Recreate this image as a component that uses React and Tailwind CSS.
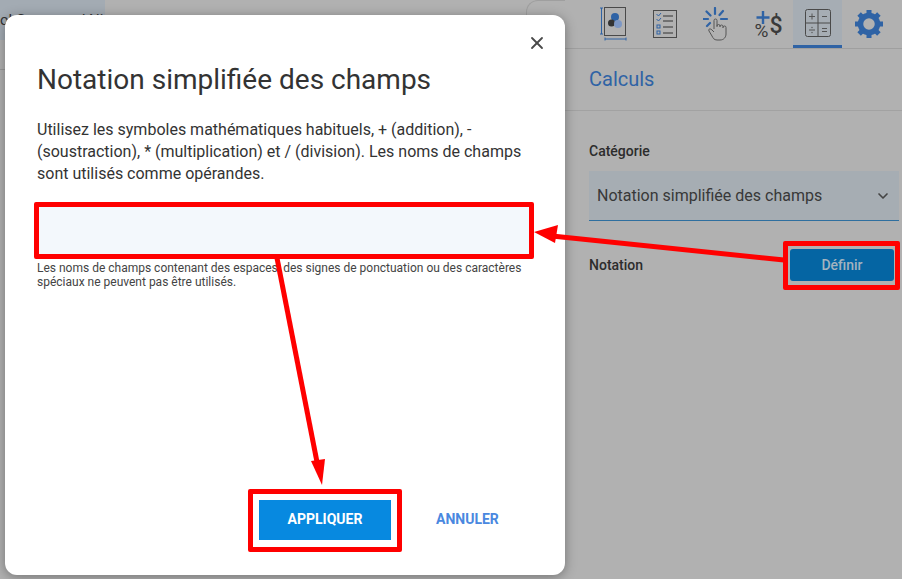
import React from 'react';
import { X, ChevronDown } from 'lucide-react';

function BookIcon() {
  return (
    <svg width="28" height="34" viewBox="0 0 28 34" fill="none">
      <path d="M1.500 1v26M0 1h3M0 27h3" stroke="#2f63a5" strokeWidth="1" />
      <rect x="4.500" y="0.500" width="21" height="28" stroke="#4a4a4a" strokeWidth="1" />
      <path d="M5 32h21M5 30.500v3M26 30.500v3" stroke="#2f63a5" strokeWidth="1" />
      <circle cx="15" cy="10" r="4" fill="#2f63a5" />
      <circle cx="11.500" cy="16" r="3.500" fill="#333333" />
      <circle cx="18" cy="17" r="4" fill="#7d97c4" />
    </svg>
  );
}

function ChecklistIcon() {
  return (
    <svg width="24" height="28" viewBox="0 0 24 28" fill="none">
      <rect x="0.500" y="0.500" width="23" height="27" stroke="#4a4a4a" strokeWidth="1" />
      <path d="M3.500 4l2 2 2.500-3M3.500 9l2 2 2.500-3" stroke="#2f63a5" strokeWidth="1" />
      <rect x="4" y="15" width="3" height="3" stroke="#2f63a5" strokeWidth="1" />
      <rect x="4" y="21" width="3" height="3" stroke="#2f63a5" strokeWidth="1" />
      <path d="M10 6h10M10 11h10M10 17h10M10 23h10" stroke="#333333" strokeWidth="1" />
    </svg>
  );
}

function TouchIcon() {
  return (
    <svg width="26" height="34" viewBox="0 0 26 34" fill="none">
      <path d="M12 1v6M3.500 4.500l4 4M20 4l-3.500 4M0 12h5M18 12h6M4 19l3-3" stroke="#2f63a5" strokeWidth="2.200" strokeLinecap="round" />
      <path d="M11 22V13.500a1.500 1.500 0 0 1 3 0V20m0-1a1.500 1.500 0 0 1 3 0v1m0-.500a1.500 1.500 0 0 1 3 0V21m0-.500a1.500 1.500 0 0 1 3 0V27c0 3-2 6-6 6h-3c-3 0-4-2-5-4l-3-5c-1-2 1-3 3-1l2 2" stroke="#555555" strokeWidth="1" />
    </svg>
  );
}

function MoneyIcon() {
  return (
    <div className="relative h-[28px] w-6">
      <svg width="24" height="28" viewBox="0 0 24 28" fill="none">
        <path d="M8 1v13M1.500 7.500h13" stroke="#2f63a5" strokeWidth="2.400" />
      </svg>
      <span className="absolute left-0 top-[11px] text-[19px] leading-5 text-[#3a3a3a]">%</span>
      <span className="absolute left-[15px] top-[4px] text-[23px] font-medium leading-6 text-[#3a3a3a]">$</span>
    </div>
  );
}

function CalcIcon() {
  return (
    <svg width="26" height="28" viewBox="0 0 26 28" fill="none">
      <rect x="0.500" y="0.500" width="25" height="27" rx="2" stroke="#4a4a4a" strokeWidth="1" />
      <path d="M13 1v26M1 14h24" stroke="#4a4a4a" strokeWidth="1" />
      <path d="M4 7.500h6M7 4.500v6M17 7.500h5M4 21h6M17 19.500h5M17 22.500h5" stroke="#555555" strokeWidth="1" />
      <circle cx="7" cy="18.500" r="0.700" fill="#555555" />
      <circle cx="7" cy="23.500" r="0.700" fill="#555555" />
    </svg>
  );
}

function GearIcon() {
  return (
    <svg width="28" height="28" viewBox="0 0 28 28" fill="none">
      <circle cx="14" cy="14" r="8.500" stroke="#2f63a5" strokeWidth="5.500" />
      <path d="M14 0v5M14 23v5M0 14h5M23 14h5M4.100 4.100l3.500 3.500M20.400 20.400l3.500 3.500M23.900 4.100l-3.500 3.500M7.600 20.400l-3.500 3.500" stroke="#2f63a5" strokeWidth="5" />
    </svg>
  );
}

function Tab({ active, children }) {
  return (
    <div className={`flex h-12 w-[49px] shrink-0 items-center justify-center ${active ? 'border-b-[3px] border-[#2f63a5] bg-[#a6adb4]' : ''}`}>
      {children}
    </div>
  );
}

function Arrows() {
  return (
    <svg className="pointer-events-none absolute left-0 top-0" width="902" height="579" viewBox="0 0 902 579" fill="none">
      <path d="M784 260L552 236" stroke="#ff0000" strokeWidth="5" />
      <path d="M534 232L558 225L555 243Z" fill="#ff0000" />
      <path d="M277 258L317 462" stroke="#ff0000" strokeWidth="5" />
      <path d="M322 485L311 461L325 459Z" fill="#ff0000" />
    </svg>
  );
}

export default function App() {
  return (
    <div className="relative flex h-[579px] w-[902px] overflow-hidden bg-[#b1b1b1] font-['Roboto',sans-serif]">
      {/* page behind the overlay */}
      <div className="relative w-[565px] shrink-0">
        <div className="h-10 w-[105px] whitespace-nowrap bg-[#a3abb3] pt-[10px] text-[15px] leading-5 text-[#333333]">ol  Compared  Ni</div>
        <div className="h-[30px] w-[5px] border-b border-[#9a9a9a]"></div>
        <div className="absolute left-[526px] top-0 h-12 w-[39px] rounded-tl-xl border-l border-t border-[#9f9f9f]"></div>
      </div>

      <div className="flex flex-1 flex-col">
        <div className="flex h-[49px] items-start justify-end gap-[2px] border-b border-[#9f9f9f] pr-[9px]">
          <Tab><BookIcon /></Tab>
          <Tab><ChecklistIcon /></Tab>
          <Tab><TouchIcon /></Tab>
          <Tab><MoneyIcon /></Tab>
          <Tab active><CalcIcon /></Tab>
          <Tab><GearIcon /></Tab>
        </div>
        <div className="flex h-[62px] items-center border-b border-[#a2a2a2] px-6 pb-[2px] text-xl text-[#2f63a5]">Calculs</div>
        <div className="pl-6 pr-[3px] pt-[30px]">
          <div className="text-sm font-medium leading-5 text-[#2c2c2c]">Catégorie</div>
          <div className="mt-[10px] flex h-[50px] items-center justify-between border-b border-[#2f6f9f] bg-[#a6adb3] pl-2 pr-2 text-base text-[#383838]">
            Notation simplifiée des champs
            <ChevronDown size={16} strokeWidth={2.500} className="text-[#444444]" />
          </div>
          <div className="mt-5 flex items-center justify-between">
            <span className="pb-[2px] text-sm font-medium text-[#2c2c2c]">Notation</span>
            <div className="-mr-px rounded-[2px] border-[5px] border-[#ff0000] bg-[#b1b1b1] pl-[2px] pr-px pt-[3px] pb-[4px]">
              <button className="block h-8 w-[104px] rounded-[3px] bg-[#0565a3] text-sm font-medium text-[#a3b3bf]">Définir</button>
            </div>
          </div>
        </div>
      </div>

      {/* dialog */}
      <div className="absolute left-[5px] top-[15px] flex h-[560px] w-[560px] flex-col rounded-xl bg-white pl-8 pr-8 shadow-[0_2px_12px_rgba(0,0,0,0.35)]">
        <button className="absolute right-[18px] top-[18px] text-[#4a4a4a]">
          <X size={20} strokeWidth={2.200} />
        </button>
        <h1 className="mt-[45px] text-[28px] font-normal leading-10 text-[#333333]">Notation simplifiée des champs</h1>
        <p className="mt-[19px] text-base leading-[22px] text-[#333333]">
          Utilisez les symboles mathématiques habituels, + (addition), - (soustraction), * (multiplication) et / (division). Les noms de champs sont utilisés comme opérandes.
        </p>
        <div className="-ml-[3px] -mr-[1px] mt-[17px] h-[57px] rounded-[2px] border-[5px] border-[#ff0000]">
          <div className="h-full bg-[#f3f8fc]"></div>
        </div>
        <p className="mt-[2px] text-xs leading-[14px] text-[#444444]">
          Les noms de champs contenant des espaces, des signes de ponctuation ou des caractères spéciaux ne peuvent pas être utilisés.
        </p>
        <div className="mt-auto mb-[23px] flex items-center">
          <div className="ml-[211px] rounded-[2px] border-[5px] border-[#ff0000] bg-white px-[6px] pt-[6px] pb-[7px]">
            <button className="block h-10 w-[132px] bg-[#0789e0] pb-[2px] text-sm font-bold text-white">APPLIQUER</button>
          </div>
          <button className="ml-[34px] pb-[3px] text-sm font-bold text-[#4a88e0]">ANNULER</button>
        </div>
      </div>

      <Arrows />
    </div>
  );
}
